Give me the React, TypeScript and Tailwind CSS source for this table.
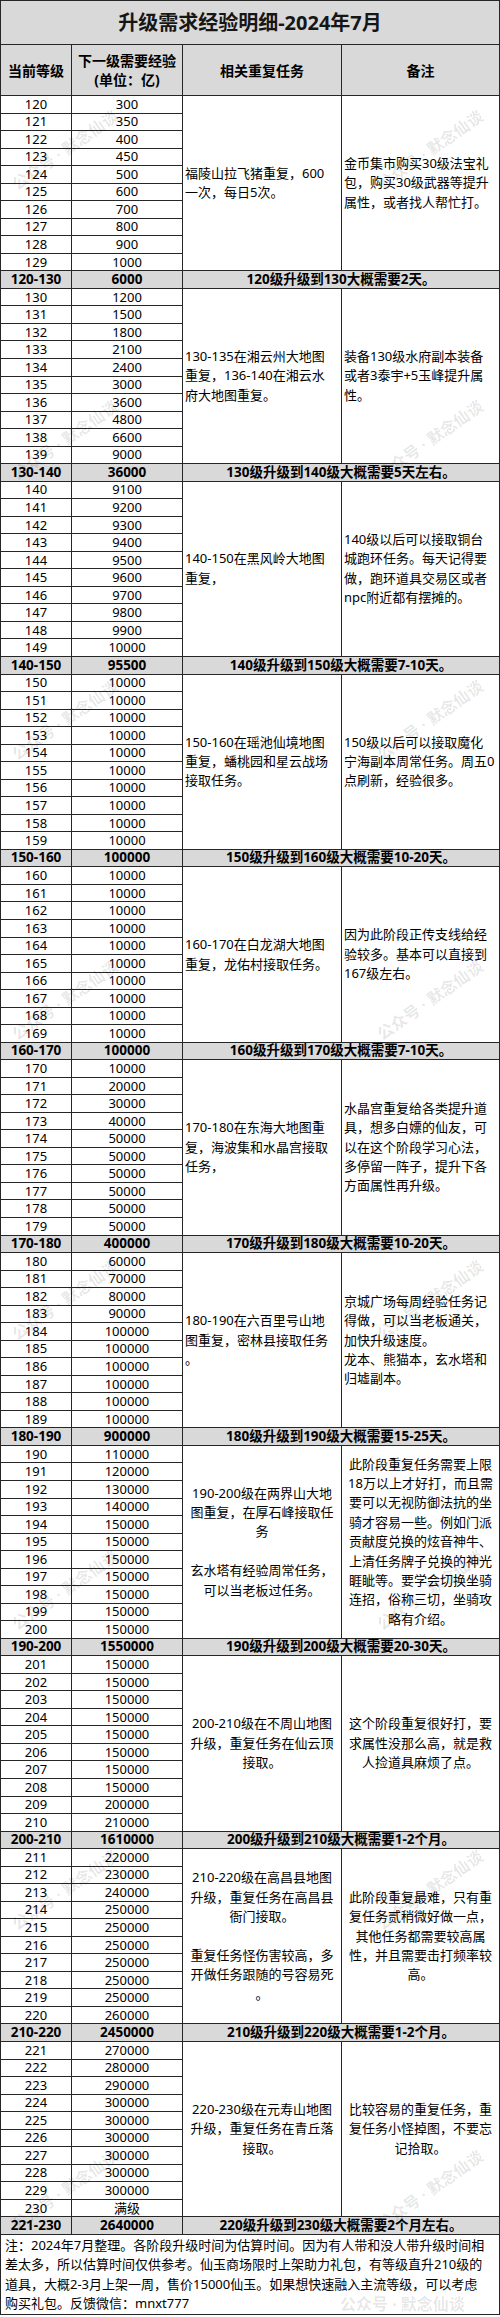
import { Fragment } from "react";

type Group = {
  rows: [string, string][];
  range: string;
  total: string;
  summary: string;
  task: string[];
  note: string[];
  center?: boolean;
};

const mk = (start: number, values: string[]): [string, string][] =>
  values.map((v, i) => [String(start + i), v]);

const groups: Group[] = [
  {
    rows: mk(120, ["300", "350", "400", "450", "500", "600", "700", "800", "900", "1000"]),
    range: "120-130",
    total: "6000",
    summary: "120级升级到130大概需要2天。",
    task: ["福陵山拉飞猪重复，600", "一次，每日5次。"],
    note: ["金币集市购买30级法宝礼", "包，购买30级武器等提升", "属性，或者找人帮忙打。"],
  },
  {
    rows: mk(130, ["1200", "1500", "1800", "2100", "2400", "3000", "3600", "4800", "6600", "9000"]),
    range: "130-140",
    total: "36000",
    summary: "130级升级到140级大概需要5天左右。",
    task: ["130-135在湘云州大地图", "重复，136-140在湘云水", "府大地图重复。"],
    note: ["装备130级水府副本装备", "或者3泰宇+5玉峰提升属", "性。"],
  },
  {
    rows: mk(140, ["9100", "9200", "9300", "9400", "9500", "9600", "9700", "9800", "9900", "10000"]),
    range: "140-150",
    total: "95500",
    summary: "140级升级到150级大概需要7-10天。",
    task: ["140-150在黑风岭大地图", "重复，"],
    note: ["140级以后可以接取铜台", "城跑环任务。每天记得要", "做，跑环道具交易区或者", "npc附近都有摆摊的。"],
  },
  {
    rows: mk(150, Array(10).fill("10000")),
    range: "150-160",
    total: "100000",
    summary: "150级升级到160级大概需要10-20天。",
    task: ["150-160在瑶池仙境地图", "重复，蟠桃园和星云战场", "接取任务。"],
    note: ["150级以后可以接取魔化", "宁海副本周常任务。周五0", "点刷新，经验很多。"],
  },
  {
    rows: mk(160, Array(10).fill("10000")),
    range: "160-170",
    total: "100000",
    summary: "160级升级到170级大概需要7-10天。",
    task: ["160-170在白龙湖大地图", "重复，龙佑村接取任务。"],
    note: ["因为此阶段正传支线给经", "验较多。基本可以直接到", "167级左右。"],
  },
  {
    rows: mk(170, ["10000", "20000", "30000", "40000", "50000", "50000", "50000", "50000", "50000", "50000"]),
    range: "170-180",
    total: "400000",
    summary: "170级升级到180级大概需要10-20天。",
    task: ["170-180在东海大地图重", "复，海波集和水晶宫接取", "任务，"],
    note: ["水晶宫重复给各类提升道", "具，想多白嫖的仙友，可", "以在这个阶段学习心法，", "多停留一阵子，提升下各", "方面属性再升级。"],
  },
  {
    rows: mk(180, ["60000", "70000", "80000", "90000", "100000", "100000", "100000", "100000", "100000", "100000"]),
    range: "180-190",
    total: "900000",
    summary: "180级升级到190级大概需要15-25天。",
    task: ["180-190在六百里号山地", "图重复，密林县接取任务", "。"],
    note: ["京城广场每周经验任务记", "得做，可以当老板通关，", "加快升级速度。", "龙本、熊猫本，玄水塔和", "归墟副本。"],
  },
  {
    rows: mk(190, ["110000", "120000", "130000", "140000", "150000", "150000", "150000", "150000", "150000", "150000", "150000"]),
    range: "190-200",
    total: "1550000",
    summary: "190级升级到200级大概需要20-30天。",
    task: ["190-200级在两界山大地", "图重复，在厚石峰接取任", "务", "", "玄水塔有经验周常任务，", "可以当老板过任务。"],
    note: [
      "此阶段重复任务需要上限",
      "18万以上才好打，而且需",
      "要可以无视防御法抗的坐",
      "骑才容易一些。例如门派",
      "贡献度兑换的炫音神牛、",
      "上清任务牌子兑换的神光",
      "睚眦等。要学会切换坐骑",
      "连招，俗称三切，坐骑攻",
      "略有介绍。",
    ],
    center: true,
  },
  {
    rows: mk(201, ["150000", "150000", "150000", "150000", "150000", "150000", "150000", "150000", "200000", "210000"]),
    range: "200-210",
    total: "1610000",
    summary: "200级升级到210级大概需要1-2个月。",
    task: ["200-210级在不周山地图", "升级，重复任务在仙云顶", "接取。"],
    note: ["这个阶段重复很好打，要", "求属性没那么高，就是救", "人捡道具麻烦了点。"],
    center: true,
  },
  {
    rows: mk(211, ["220000", "230000", "240000", "250000", "250000", "250000", "250000", "250000", "250000", "260000"]),
    range: "210-220",
    total: "2450000",
    summary: "210级升级到220级大概需要1-2个月。",
    task: ["210-220级在高昌县地图", "升级，重复任务在高昌县", "衙门接取。", "", "重复任务怪伤害较高，多", "开做任务跟随的号容易死", "。"],
    note: ["此阶段重复最难，只有重", "复任务贰稍微好做一点，", "其他任务都需要较高属", "性，并且需要击打频率较", "高。"],
    center: true,
  },
  {
    rows: mk(221, ["270000", "280000", "290000", "300000", "300000", "300000", "300000", "300000", "300000", "满级"]),
    range: "221-230",
    total: "2640000",
    summary: "220级升级到230级大概需要2个月左右。",
    task: ["220-230级在元寿山地图", "升级，重复任务在青丘落", "接取。"],
    note: ["比较容易的重复任务，重", "复任务小怪掉图，不要忘", "记拾取。"],
    center: true,
  },
];

const spans: Record<number, string> = { 10: "row-span-10", 11: "row-span-11" };

const Lines = ({ lines, center, span }: { lines: string[]; center?: boolean; span: number }) => (
  <div
    className={`${spans[span]} flex flex-col justify-center bg-white px-[2px] text-[13px] leading-[19.4px] ${
      center ? "items-center text-center" : "items-start text-left"
    }`}
  >
    {lines.map((l, i) => (
      <div key={i} className="whitespace-nowrap">
        {l || "\u00a0"}
      </div>
    ))}
  </div>
);

// watermark rows, left and right
const marks = [150, 440, 720, 1000, 1300, 1590, 1890, 2190];

const App = () => {
  return (
    <div
      className="relative w-[500px] overflow-hidden bg-white text-black"
      style={{ fontFamily: '"Noto Sans", "Noto Sans CJK SC", sans-serif' }}
    >
      <div className="flex flex-col gap-px bg-[#262626] p-px">
        <div className="flex h-[43px] items-center justify-center bg-[#d9d9d9] text-[20px] font-bold text-[#161616]">
          升级需求经验明细-2024年7月
        </div>

        <div className="grid h-[50px] grid-cols-[70px_110px_158px_157px] gap-px text-[14px] font-bold leading-[19px]">
          <div className="flex items-center justify-center bg-[#d9d9d9]">当前等级</div>
          <div className="flex flex-col items-center justify-center bg-[#d9d9d9]">
            <span>下一级需要经验</span>
            <span>(单位：亿)</span>
          </div>
          <div className="flex items-center justify-center bg-[#d9d9d9]">相关重复任务</div>
          <div className="flex items-center justify-center bg-[#d9d9d9]">备注</div>
        </div>

        <div className="grid auto-rows-[16.54px] grid-cols-[70px_110px_158px_157px] gap-px text-[13px] leading-none">
          {groups.map((g) => (
            <Fragment key={g.range}>
              {g.rows.map(([lv, exp], i) => (
                <Fragment key={lv}>
                  <div className="col-start-1 flex items-center justify-center bg-white">{lv}</div>
                  <div className="col-start-2 flex items-center justify-center bg-white">{exp}</div>
                  {i === 0 && (
                    <>
                      <Lines lines={g.task} center={g.center} span={g.rows.length} />
                      <Lines lines={g.note} center={g.center} span={g.rows.length} />
                    </>
                  )}
                </Fragment>
              ))}
              <div className="col-start-1 flex items-center justify-center bg-[#d9d9d9] text-[13.5px] font-bold">
                {g.range}
              </div>
              <div className="col-start-2 flex items-center justify-center bg-[#d9d9d9] text-[13.5px] font-bold">
                {g.total}
              </div>
              <div className="col-span-2 flex items-center justify-center bg-[#d9d9d9] text-[13.5px] font-bold">
                {g.summary}
              </div>
            </Fragment>
          ))}
        </div>

        <div className="h-[79px] whitespace-nowrap bg-white px-[4px] pt-[1px] text-[13px] leading-[19.5px]">
          注：2024年7月整理。各阶段升级时间为估算时间。因为有人带和没人带升级时间相
          <br />
          差太多，所以估算时间仅供参考。仙玉商场限时上架助力礼包，有等级直升210级的
          <br />
          道具，大概2-3月上架一周，售价15000仙玉。如果想快速融入主流等级，可以考虑
          <br />
          购买礼包。反馈微信：mnxt777
        </div>
      </div>

      {marks.map((y) => (
        <Fragment key={y}>
          <div
            className="pointer-events-none absolute left-[65px] -translate-x-1/2 -translate-y-1/2 -rotate-[35deg] whitespace-nowrap text-[16px] font-bold text-black/10"
            style={{ top: y }}
          >
            公众号 · 默念仙谈
          </div>
          <div
            className="pointer-events-none absolute left-[430px] -translate-x-1/2 -translate-y-1/2 -rotate-[35deg] whitespace-nowrap text-[16px] font-bold text-black/10"
            style={{ top: y }}
          >
            公众号 · 默念仙谈
          </div>
        </Fragment>
      ))}
      <div className="pointer-events-none absolute left-[340px] top-[2292px] whitespace-nowrap text-[16px] font-bold text-black/10">
        公众号 · 默念仙谈
      </div>
    </div>
  );
};

export default App;
